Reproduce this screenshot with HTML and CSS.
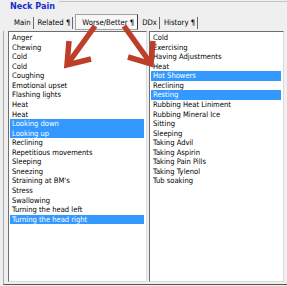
FILE: index.html
```html
<!DOCTYPE html>
<html lang="en">
<head>
    <meta charset="UTF-8">
    <title>Neck Pain</title>
    <link rel="stylesheet" href="styles.css">
</head>
<body>
    <div class="window">
        <div class="title"><span>Neck Pain</span></div>
        <div class="tabs">
            <span class="tab">Main</span>
            <span class="tab">Related ¶</span>
            <span class="tab active">Worse/Better ¶</span>
            <span class="tab">DDx</span>
            <span class="tab">History ¶</span>
        </div>
        <div class="page">
            <ul class="list worse">
                <li>Anger</li>
                <li>Chewing</li>
                <li>Cold</li>
                <li>Cold</li>
                <li>Coughing</li>
                <li>Emotional upset</li>
                <li>Flashing lights</li>
                <li>Heat</li>
                <li>Heat</li>
                <li class="selected">Looking down</li>
                <li class="selected">Looking up</li>
                <li>Reclining</li>
                <li>Repetitious movements</li>
                <li>Sleeping</li>
                <li>Sneezing</li>
                <li>Straining at BM's</li>
                <li>Stress</li>
                <li>Swallowing</li>
                <li>Turning the head left</li>
                <li class="selected">Turning the head right</li>
            </ul>
            <ul class="list better">
                <li>Cold</li>
                <li>Exercising</li>
                <li>Having Adjustments</li>
                <li>Heat</li>
                <li class="selected">Hot Showers</li>
                <li>Reclining</li>
                <li class="selected">Resting</li>
                <li>Rubbing Heat Liniment</li>
                <li>Rubbing Mineral Ice</li>
                <li>Sitting</li>
                <li>Sleeping</li>
                <li>Taking Advil</li>
                <li>Taking Aspirin</li>
                <li>Taking Pain Pills</li>
                <li>Taking Tylenol</li>
                <li>Tub soaking</li>
            </ul>
        </div>

        <!-- callout arrows drawn over the tabs and lists -->
        <svg class="arrows" width="287" height="286" viewBox="0 0 287 286">
            <g fill="none" stroke="#bd3f2a" stroke-width="5.5" stroke-linecap="butt" stroke-linejoin="miter">
                <line x1="95" y1="26" x2="69" y2="62"/>
                <polyline points="69,41 67,65 91,59"/>
                <line x1="124" y1="26" x2="149" y2="61"/>
                <polyline points="153,41 151,64 128,57"/>
            </g>
        </svg>
    </div>
</body>
</html>
```

FILE: styles.css
```css
body, html {
    margin: 0;
    padding: 0;
    background: #efefef;
    font-family: 'DejaVu Sans Condensed', 'Liberation Sans', sans-serif;
    overflow: hidden;
}
.window {
    position: relative;
    width: 287px;
    height: 286px;
}
.title {
    display: flex;
    height: 14px;
    box-sizing: border-box;
    padding: 1px 0 0 10px;
    font-size: 9px;
    font-weight: bold;
    line-height: 11px;
    color: #1630cc;
}
.title::after {
    content: "";
    flex: 1;
    margin: 0 0 0 4px;
    height: 0;
    border-top: 1px solid #c4c4c4;
}
.tabs {
    display: flex;
    align-items: flex-start;
    height: 17px;
    padding-left: 10px;
    font-size: 7.7px;
    color: #000;
}
.tab {
    margin-top: 3px;
    height: 12px;
    line-height: 12px;
    padding: 0 2px 0 4px;
    border-right: 1px solid #6a6a6a;
    white-space: nowrap;
}
.tab.active {
    margin: 0 0 0 2px;
    height: auto;
    padding: 2px 3px 0 6px;
    border: 1px solid #a3a3a3;
    border-right-color: #3c3c3c;
    background: #f7f7f7;
}
.page {
    display: flex;
    gap: 2px;
    margin-left: 3px;
    padding: 0 0 2px 4px;
    border-left: 1px solid #a8a8a8;
    border-bottom: 1px solid #555;
}
.list {
    margin: 0;
    padding: 1px;
    list-style: none;
    height: 251px;
    box-sizing: border-box;
    background: #fff;
    border: 1px solid #dcdcdc;
    border-top-color: #6e6e6e;
    border-left-color: #6e6e6e;
    font-size: 7.55px;
    line-height: 9.56px;
    color: #000;
}
.worse {
    width: 139px;
}
.better {
    width: 135px;
}
.list li {
    padding-left: 2px;
    margin-right: 1px;
    white-space: nowrap;
}
.list li.selected {
    background: #3399ff;
    color: #fff;
}
.arrows {
    position: absolute;
    top: 0;
    left: 0;
    pointer-events: none;
}
```
